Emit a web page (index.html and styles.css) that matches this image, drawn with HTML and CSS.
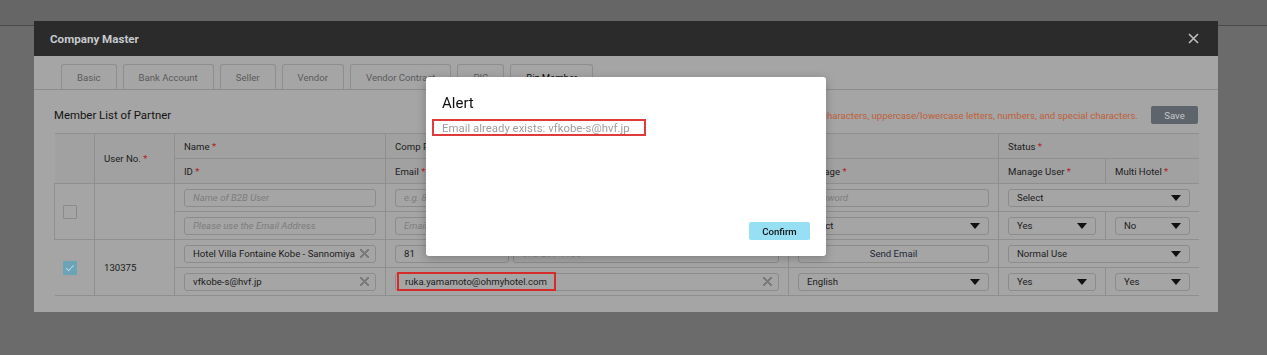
FILE: index.html
```html
<!DOCTYPE html>
<html lang="en">

<head>
    <meta charset="UTF-8">
    <meta name="viewport" content="width=device-width, initial-scale=1.0">
    <title>Company Master</title>
    <link rel="stylesheet" href="styles.css">
</head>

<body>
    <div class="page-top"></div>

    <div class="modal-layer">
        <div class="modal">
            <div class="modal-header">
                <span class="modal-title">Company Master</span>
                <button class="close-btn" aria-label="Close">
                    <svg width="11" height="11" viewBox="0 0 11 11">
                        <path d="M1 1L10 10M10 1L1 10" stroke="#bfbfbf" stroke-width="1.6" fill="none" />
                    </svg>
                </button>
            </div>

            <div class="tabs">
                <div class="tab">Basic</div>
                <div class="tab">Bank Account</div>
                <div class="tab">Seller</div>
                <div class="tab">Vendor</div>
                <div class="tab">Vendor Contract</div>
                <div class="tab">PIC</div>
                <div class="tab active">Biz Member</div>
            </div>

            <div class="modal-content">
                <div class="toolbar">
                    <h3 class="toolbar-title">Member List of Partner</h3>
                    <div class="toolbar-right">
                        <span class="notice">Password must contain at least 8 characters, uppercase/lowercase letters, numbers, and special characters.</span>
                        <button class="btn-save">Save</button>
                    </div>
                </div>

                <table class="member-table">
                    <colgroup>
                        <col class="w-check">
                        <col class="w-no">
                        <col class="w-name">
                        <col class="w-comp">
                        <col class="w-lang">
                        <col class="w-manage">
                        <col class="w-multi">
                    </colgroup>
                    <thead>
                        <tr>
                            <th rowspan="2"></th>
                            <th rowspan="2">User No. <span class="req">*</span></th>
                            <th>Name <span class="req">*</span></th>
                            <th>Comp Phone <span class="req">*</span></th>
                            <th></th>
                            <th colspan="2">Status <span class="req">*</span></th>
                        </tr>
                        <tr>
                            <th>ID <span class="req">*</span></th>
                            <th>Email <span class="req">*</span></th>
                            <th>Language <span class="req">*</span></th>
                            <th>Manage User <span class="req">*</span></th>
                            <th>Multi Hotel <span class="req">*</span></th>
                        </tr>
                    </thead>
                    <tbody>
                        <tr>
                            <td rowspan="2" class="cell-check"><span class="checkbox"></span></td>
                            <td rowspan="2" class="cell-no"></td>
                            <td><div class="field placeholder">Name of B2B User</div></td>
                            <td>
                                <div class="field-pair">
                                    <div class="field placeholder short">e.g. 81</div>
                                    <div class="field placeholder">e.g. 03-1234-5678</div>
                                </div>
                            </td>
                            <td><div class="field placeholder">Password</div></td>
                            <td colspan="2"><div class="field select">Select</div></td>
                        </tr>
                        <tr>
                            <td><div class="field placeholder">Please use the Email Address</div></td>
                            <td><div class="field placeholder">Email Address</div></td>
                            <td><div class="field select">Select</div></td>
                            <td><div class="field select">Yes</div></td>
                            <td><div class="field select">No</div></td>
                        </tr>
                        <tr class="member-start">
                            <td rowspan="2" class="cell-check"><span class="checkbox checked"></span></td>
                            <td rowspan="2" class="cell-no">130375</td>
                            <td><div class="field clearable">Hotel Villa Fontaine Kobe - Sannomiya</div></td>
                            <td>
                                <div class="field-pair">
                                    <div class="field short">81</div>
                                    <div class="field faint">078-291-1100</div>
                                </div>
                            </td>
                            <td><button class="btn-send">Send Email</button></td>
                            <td colspan="2"><div class="field select">Normal Use</div></td>
                        </tr>
                        <tr>
                            <td><div class="field clearable">vfkobe-s@hvf.jp</div></td>
                            <td><div class="field clearable"><span class="mark">ruka.yamamoto@ohmyhotel.com</span></div></td>
                            <td><div class="field select">English</div></td>
                            <td><div class="field select">Yes</div></td>
                            <td><div class="field select">Yes</div></td>
                        </tr>
                    </tbody>
                </table>
            </div>
        </div>
    </div>

    <div class="alert-layer">
        <div class="alert">
            <div class="alert-title">Alert</div>
            <div class="alert-msg">Email already exists: vfkobe-s@hvf.jp</div>
            <button class="btn-confirm">Confirm</button>
        </div>
    </div>
</body>

</html>
```

FILE: styles.css
```css
* {
    box-sizing: border-box;
}

body {
    margin: 0;
    background-color: #6b6b6b;
    font-family: Roboto, "Liberation Sans", sans-serif;
    color: #1c1c1c;
}

button {
    font-family: inherit;
    cursor: pointer;
}

/* page behind the dialogs */
.page-top {
    height: 26px;
    background-color: #666;
    border-bottom: 1px solid #4a4a4a;
}

.modal-layer {
    position: fixed;
    top: 0;
    left: 0;
    right: 0;
    bottom: 0;
    padding: 21px 0 0 34px;
}

.modal {
    width: 1184px;
    background-color: #a5a5a5;
}

.modal-header {
    height: 35px;
    background-color: #2b2b2b;
    display: flex;
    justify-content: space-between;
    align-items: center;
    padding: 0 19px 0 16px;
}

.modal-title {
    font-size: 11.6px;
    font-weight: bold;
    color: #c6c9cd;
}

.close-btn {
    background: none;
    border: none;
    padding: 0;
    display: flex;
}

/* tabs */
.tabs {
    display: flex;
    gap: 6px;
    padding: 8px 0 0 27px;
    border-bottom: 1px solid #8c8c8c;
}

.tab {
    height: 25px;
    padding: 0 15px;
    display: flex;
    align-items: center;
    font-size: 9.6px;
    color: #5b5b5b;
    border: 1px solid #8e8e8e;
    border-bottom: none;
    border-radius: 3px 3px 0 0;
}

.tab.active {
    color: #111;
}

/* content */
.modal-content {
    padding: 16px 20px 16px 20px;
}

.toolbar {
    height: 18px;
    display: flex;
    justify-content: space-between;
    align-items: center;
    margin-bottom: 9px;
}

.toolbar-title {
    margin: 0;
    font-size: 11.4px;
    font-weight: normal;
    color: #141414;
}

.toolbar-right {
    display: flex;
    align-items: center;
    gap: 13px;
}

.notice {
    font-size: 9.6px;
    color: #bf603a;
}

.btn-save {
    width: 47px;
    height: 18px;
    border: none;
    border-radius: 2px;
    background-color: #5e646c;
    color: #c3c6ca;
    font-size: 9.6px;
}

/* table */
.member-table {
    width: 1144px;
    border-collapse: collapse;
    table-layout: fixed;
    font-size: 9.6px;
    border-top: 1px solid #6a6a6a;
    border-bottom: 1px solid #6a6a6a;
}

.w-check { width: 40px; }
.w-no { width: 80px; }
.w-name { width: 211px; }
.w-comp { width: 403px; }
.w-lang { width: 210px; }
.w-manage { width: 107px; }
.w-multi { width: 93px; }

.member-table th,
.member-table td {
    border: 1px solid #8f8f8f;
    padding: 0 9px;
    text-align: left;
    font-weight: normal;
    color: #1c1c1c;
}

.member-table th:first-child,
.member-table td:first-child {
    border-left: none;
}

.member-table th:last-child,
.member-table td:last-child {
    border-right: none;
}

.member-table thead tr {
    height: 25px;
    background-color: #a1a1a1;
}

.member-table tbody tr {
    height: 28px;
}

.member-table tbody tr:not(.member-start) td:first-child {
    border-left: 1px solid #8f8f8f;
}

.member-table tbody tr td.cell-check {
    border-left: none;
}

.req {
    color: #b41c1c;
}

.cell-check {
    padding: 0 8px !important;
}

.checkbox {
    display: block;
    width: 14px;
    height: 14px;
    border: 1px solid #8a8a8a;
    border-radius: 1px;
}

.checkbox.checked {
    border: none;
    background-color: #6aa4b6;
    position: relative;
}

.checkbox.checked::after {
    content: "";
    position: absolute;
    left: 5px;
    top: 2px;
    width: 3px;
    height: 7px;
    border: solid #b9d6df;
    border-width: 0 1.5px 1.5px 0;
    transform: rotate(45deg);
}

/* form fields */
.field {
    height: 18px;
    border: 1px solid #8c8c8c;
    border-radius: 3px;
    padding: 0 8px;
    display: flex;
    align-items: center;
    white-space: nowrap;
    overflow: visible;
    font-size: 9.6px;
    color: #1c1c1c;
    flex: 1;
}

.field.placeholder {
    color: #7d7d7d;
    font-style: italic;
}

.field.faint {
    color: #8a8a8a;
}

.field.short {
    flex: 0 0 114px;
}

.field-pair {
    display: flex;
    gap: 4px;
}

.field.clearable,
.field.select {
    justify-content: space-between;
    padding-right: 6px;
}

.field.clearable::after {
    content: "";
    width: 9px;
    height: 9px;
    background:
        linear-gradient(45deg, transparent 42%, #7b7b7b 42%, #7b7b7b 58%, transparent 58%),
        linear-gradient(-45deg, transparent 42%, #7b7b7b 42%, #7b7b7b 58%, transparent 58%);
}

.field.select::after {
    content: "";
    border-left: 5px solid transparent;
    border-right: 5px solid transparent;
    border-top: 6px solid #111;
    margin-right: 2px;
}

.mark {
    height: 19px;
    display: flex;
    align-items: center;
    margin-left: -7px;
    padding: 0 7px 0 6px;
    border: 2px solid #d62b2b;
}

.btn-send {
    width: 100%;
    height: 18px;
    border: 1px solid #8c8c8c;
    border-radius: 3px;
    background: none;
    font-size: 9.6px;
    color: #1d2a38;
}

/* alert dialog */
.alert-layer {
    position: fixed;
    top: 0;
    left: 0;
    right: 0;
    bottom: 0;
    padding: 77px 0 0 426px;
}

.alert {
    width: 400px;
    height: 179px;
    background-color: #fff;
    border-radius: 3px;
    box-shadow: 0 2px 10px rgba(0, 0, 0, 0.25);
    padding: 17px 16px 16px 16px;
    display: flex;
    flex-direction: column;
}

.alert-title {
    font-size: 15px;
    line-height: 18px;
    color: #111;
}

.alert-msg {
    align-self: flex-start;
    margin: 7px 0 0 -10px;
    height: 17px;
    padding: 0 14px 0 8px;
    border: 2px solid #e03a3d;
    display: flex;
    align-items: center;
    font-size: 11.4px;
    color: #9e9e9e;
}

.btn-confirm {
    margin-top: auto;
    align-self: flex-end;
    width: 61px;
    height: 18px;
    border: none;
    border-radius: 2px;
    background-color: #97dff2;
    color: #111;
    font-size: 9.6px;
    font-weight: 500;
}
```
